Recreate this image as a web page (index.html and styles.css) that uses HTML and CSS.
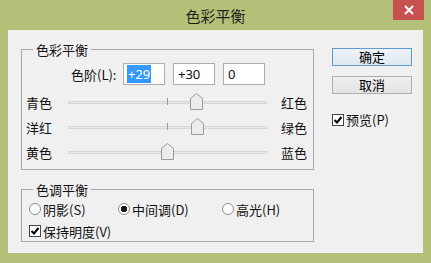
FILE: index.html
```html
<!DOCTYPE html>
<html lang="zh-CN">
<head>
    <meta charset="UTF-8">
    <title>色彩平衡</title>
    <link rel="stylesheet" href="styles.css">
</head>
<body>
    <div class="window">
        <div class="titlebar">
            <span class="title">色彩平衡</span>
            <button class="close">
                <svg width="10" height="10" viewBox="0 0 10 10"><path d="M1 1 L9 9 M9 1 L1 9" stroke="#fff" stroke-width="2"/></svg>
            </button>
        </div>
        <div class="client">
            <div class="main">
                <div class="group">
                    <div class="group-title">色彩平衡</div>
                    <div class="levels">
                        <span class="levels-label">色阶(L):</span>
                        <div class="field"><span class="selected">+29</span></div>
                        <div class="field">+30</div>
                        <div class="field">0</div>
                    </div>
                    <div class="sliders">
                        <div class="slider-row">
                            <span class="slider-label">青色</span>
                            <div class="track-wrap">
                                <div class="track"></div>
                                <div class="tick"></div>
                                <svg class="thumb" style="left: calc(64.5% - 6.5px)" width="13" height="17" viewBox="0 0 13 17"><path d="M0.5 16.5 L0.5 5.5 L6.5 0.5 L12.5 5.5 L12.5 16.5 Z" fill="#ececec" stroke="#9a9a9a"/></svg>
                            </div>
                            <span class="slider-end">红色</span>
                        </div>
                        <div class="slider-row">
                            <span class="slider-label">洋红</span>
                            <div class="track-wrap">
                                <div class="track"></div>
                                <div class="tick"></div>
                                <svg class="thumb" style="left: calc(65% - 6.5px)" width="13" height="17" viewBox="0 0 13 17"><path d="M0.5 16.5 L0.5 5.5 L6.5 0.5 L12.5 5.5 L12.5 16.5 Z" fill="#ececec" stroke="#9a9a9a"/></svg>
                            </div>
                            <span class="slider-end">绿色</span>
                        </div>
                        <div class="slider-row">
                            <span class="slider-label">黄色</span>
                            <div class="track-wrap">
                                <div class="track"></div>
                                <div class="tick"></div>
                                <svg class="thumb" style="left: calc(50% - 6.5px)" width="13" height="17" viewBox="0 0 13 17"><path d="M0.5 16.5 L0.5 5.5 L6.5 0.5 L12.5 5.5 L12.5 16.5 Z" fill="#ececec" stroke="#9a9a9a"/></svg>
                            </div>
                            <span class="slider-end">蓝色</span>
                        </div>
                    </div>
                </div>
                <div class="group tone">
                    <div class="group-title">色调平衡</div>
                    <div class="tone-row radios">
                        <label class="opt opt-shadow"><span class="radio"></span>阴影(S)</label>
                        <label class="opt opt-mid"><span class="radio checked"></span>中间调(D)</label>
                        <label class="opt"><span class="radio"></span>高光(H)</label>
                    </div>
                    <div class="tone-row">
                        <label class="opt"><span class="check"><svg width="10" height="10" viewBox="0 0 10 10"><path d="M1.5 5 L4 7.5 L8.5 2" fill="none" stroke="#000" stroke-width="2"/></svg></span>保持明度(V)</label>
                    </div>
                </div>
            </div>
            <div class="side">
                <button class="btn default">确定</button>
                <button class="btn">取消</button>
                <label class="opt preview"><span class="check"><svg width="10" height="10" viewBox="0 0 10 10"><path d="M1.5 5 L4 7.5 L8.5 2" fill="none" stroke="#000" stroke-width="2"/></svg></span>预览(P)</label>
            </div>
        </div>
    </div>
</body>
</html>
```

FILE: styles.css
```css
body {
    margin: 0;
    background: #b4c078;
    font-family: "Noto Sans CJK SC", "Noto Sans", sans-serif;
    font-size: 13px;
    color: #111;
}
.window {
    width: 431px;
    height: 263px;
}
.titlebar {
    height: 30px;
    display: grid;
    grid-template-columns: 38px 1fr 38px;
}
.title {
    grid-column: 2;
    text-align: center;
    font-size: 15px;
    line-height: 30px;
    padding-top: 1px;
    color: #1e1e1e;
}
.close {
    grid-column: 3;
    width: 31px;
    height: 20px;
    padding: 0;
    border: none;
    background: #c75050;
    display: flex;
    align-items: center;
    justify-content: center;
}
.client {
    margin: 0 8px;
    height: 223px;
    box-sizing: border-box;
    padding-left: 13px;
    background: #f0f0f0;
    display: flex;
}
.main {
    width: 293px;
}
.group {
    border: 1px solid #a8a8a8;
    margin-top: 19px;
}
.group-title {
    width: fit-content;
    margin: -8px 0 0 11px;
    padding: 0 3px;
    height: 15px;
    line-height: 15px;
    background: #f0f0f0;
}
.levels {
    display: flex;
    align-items: center;
    gap: 8px;
    height: 22px;
    margin-top: 6px;
    padding-left: 49px;
}
.levels-label {
    width: 44px;
    flex-shrink: 0;
    white-space: nowrap;
}
.field {
    width: 42px;
    height: 22px;
    flex-shrink: 0;
    box-sizing: border-box;
    border: 1px solid #abadb3;
    background: #fff;
    padding-left: 4px;
    line-height: 20px;
    font-family: "Noto Sans", sans-serif;
}
.selected {
    background: #3399ff;
    color: #fff;
    margin-left: -1px;
    padding: 0 1px;
}
.sliders {
    margin-top: 5px;
    padding: 0 0 4px 4px;
}
.slider-row {
    display: flex;
    align-items: center;
    height: 25px;
}
.slider-label {
    width: 42px;
}
.track-wrap {
    position: relative;
    width: 199px;
    height: 25px;
    display: flex;
    align-items: center;
}
.track {
    width: 100%;
    height: 3px;
    box-sizing: border-box;
    border: 1px solid #d6d6d6;
    background: #e8e8e8;
}
.tick {
    position: absolute;
    left: 99px;
    top: 8px;
    width: 1px;
    height: 7px;
    background: #9a9a9a;
}
.thumb {
    position: absolute;
    top: 3px;
}
.slider-end {
    margin-left: 14px;
}
.tone-row {
    display: flex;
    align-items: center;
    height: 20px;
    margin-top: 2px;
    padding-left: 7px;
}
.opt {
    display: flex;
    align-items: center;
    gap: 2px;
}
.opt-shadow {
    width: 89px;
}
.opt-mid {
    width: 104px;
}
.radio {
    width: 12px;
    height: 12px;
    box-sizing: border-box;
    border: 1px solid #8c8c8c;
    border-radius: 50%;
    background: #fff;
}
.radio.checked {
    background: radial-gradient(circle, #1a1a1a 0, #1a1a1a 3px, #fff 3.5px);
}
.check {
    width: 12px;
    height: 12px;
    box-sizing: border-box;
    border: 1px solid #444;
    background: #fff;
    display: flex;
    align-items: center;
    justify-content: center;
}
.side {
    margin-left: 18px;
    padding-top: 18px;
    display: flex;
    flex-direction: column;
}
.btn {
    width: 80px;
    height: 18px;
    box-sizing: border-box;
    padding: 0;
    border: 1px solid #adadad;
    background: linear-gradient(#efefef, #e3e3e3);
    font-family: inherit;
    font-size: 13px;
    line-height: 16px;
    color: #000;
}
.btn.default {
    border-color: #5d9ad0;
    background: linear-gradient(#eef3f8, #e0e8f0);
}
.btn + .btn {
    margin-top: 10px;
}
.preview {
    margin-top: 16px;
}
```
